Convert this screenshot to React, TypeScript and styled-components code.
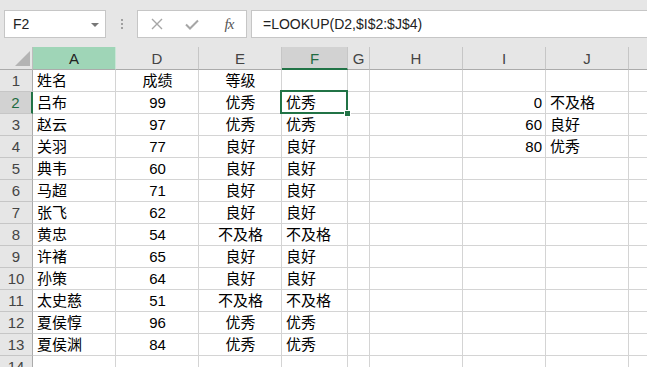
import React from "react";
import styled, { createGlobalStyle, css } from "styled-components";

const Global = createGlobalStyle`
  html, body { margin: 0; padding: 0; overflow: hidden; background: #ffffff; }
  body { width: 647px; height: 367px; font-family: "Liberation Sans", "Noto Sans CJK SC", sans-serif; }
`;

const Page = styled.div`
  width: 647px;
  height: 367px;
  overflow: hidden;
  display: flex;
  flex-direction: column;
`;

const Toolbar = styled.div`
  height: 47px;
  flex: none;
  background: #e6e6e6;
  display: flex;
  align-items: flex-start;
  padding: 10px 0 0 4px;
  box-sizing: border-box;
`;

const NameBox = styled.div`
  width: 102px;
  height: 28px;
  box-sizing: border-box;
  background: #fff;
  border: 1px solid #c6c6c6;
  display: flex;
  align-items: center;
  justify-content: space-between;
  padding: 0 6px 0 8px;
  font-size: 14px;
  color: #222;
`;

const Caret = styled.span`
  width: 0;
  height: 0;
  border-left: 4px solid transparent;
  border-right: 4px solid transparent;
  border-top: 4px solid #777;
  margin-top: 1px;
`;

const Dots = styled.div`
  width: 31px;
  height: 28px;
  display: flex;
  flex-direction: column;
  align-items: center;
  justify-content: center;
  gap: 2px;
`;

const Dot = styled.span`
  width: 2px;
  height: 2px;
  background: #a0a0a0;
`;

const FxBox = styled.div`
  width: 110px;
  height: 28px;
  box-sizing: border-box;
  background: #fff;
  border: 1px solid #c6c6c6;
  display: flex;
  align-items: center;
  padding-left: 12px;
`;

const IconSlot = styled.span<{ $w: number }>`
  width: ${(p) => p.$w}px;
  display: flex;
  align-items: center;
  justify-content: center;
`;

const FxText = styled.span`
  font-family: "Liberation Serif", "DejaVu Serif", serif;
  font-style: italic;
  font-size: 15px;
  color: #555;
  letter-spacing: -1px;
`;

const FormulaInput = styled.div`
  flex: 1;
  margin-left: 4px;
  height: 28px;
  box-sizing: border-box;
  background: #fff;
  border: 1px solid #c6c6c6;
  border-right: none;
  display: flex;
  align-items: center;
  padding-left: 11px;
  font-size: 14px;
  color: #222;
`;

const Sheet = styled.div`
  display: grid;
  grid-template-columns: 33px 83px 83px 83px 66px 22px 93px 83px 83px 83px;
  grid-auto-rows: 22px;
  grid-template-rows: 23px;
  background: #fff;
  overflow: hidden;
`;

const Corner = styled.div`
  background: #e6e6e6;
  border-right: 1px solid #bdbdbd;
  border-bottom: 1px solid #ababab;
  box-sizing: border-box;
  display: flex;
  align-items: flex-end;
  justify-content: flex-end;
  padding: 0 2px 3px 0;
`;

const CornerTriangle = styled.span`
  width: 0;
  height: 0;
  border-left: 15px solid transparent;
  border-bottom: 15px solid #b4b4b4;
`;

const ColHead = styled.div<{ $state?: "sel" | "hl" }>`
  box-sizing: border-box;
  background: #e6e6e6;
  border-right: 1px solid #c6c6c6;
  border-bottom: 1px solid #ababab;
  display: flex;
  align-items: center;
  justify-content: center;
  font-size: 15px;
  color: #444;
  padding-top: 1px;
  ${(p) =>
    p.$state === "sel" &&
    css`
      background: #d2d2d2;
      border-bottom: 2px solid #217346;
      color: #1e6b41;
    `}
  ${(p) =>
    p.$state === "hl" &&
    css`
      background: #9fd5b7;
      border-right: 1px solid #c9e6d6;
      color: #222;
    `}
`;

const RowHead = styled.div<{ $sel?: boolean }>`
  box-sizing: border-box;
  background: #e6e6e6;
  border-right: 1px solid #ababab;
  border-bottom: 1px solid #c6c6c6;
  display: flex;
  align-items: flex-end;
  justify-content: center;
  font-size: 15px;
  line-height: 20px;
  color: #444;
  ${(p) =>
    p.$sel &&
    css`
      background: #d2d2d2;
      border-right: 2px solid #217346;
      color: #1e6b41;
    `}
`;

type Align = "left" | "center" | "right";

const Cell = styled.div<{ $align: Align; $sel?: boolean }>`
  position: relative;
  box-sizing: border-box;
  border-right: 1px solid #d4d4d4;
  border-bottom: 1px solid #d4d4d4;
  display: flex;
  align-items: flex-end;
  justify-content: ${(p) =>
    p.$align === "left" ? "flex-start" : p.$align === "right" ? "flex-end" : "center"};
  padding: 0 3px 0 4px;
  font-size: 15px;
  line-height: 20px;
  color: #000;
  white-space: nowrap;
  ${(p) =>
    p.$sel &&
    css`
      &::after {
        content: "";
        position: absolute;
        top: -2px;
        left: -2px;
        right: -1px;
        bottom: -1px;
        border: 2px solid #217346;
        pointer-events: none;
      }
      &::before {
        content: "";
        position: absolute;
        right: -4px;
        bottom: -4px;
        width: 5px;
        height: 5px;
        background: #217346;
        border: 1px solid #fff;
        z-index: 2;
      }
    `}
`;

const columns: { key: string; align: Align }[] = [
  { key: "A", align: "left" },
  { key: "D", align: "center" },
  { key: "E", align: "center" },
  { key: "F", align: "left" },
  { key: "G", align: "left" },
  { key: "H", align: "left" },
  { key: "I", align: "right" },
  { key: "J", align: "left" },
  { key: "K", align: "left" },
];

const rows: string[][] = [
  ["姓名", "成绩", "等级", "", "", "", "", "", ""],
  ["吕布", "99", "优秀", "优秀", "", "", "0", "不及格", ""],
  ["赵云", "97", "优秀", "优秀", "", "", "60", "良好", ""],
  ["关羽", "77", "良好", "良好", "", "", "80", "优秀", ""],
  ["典韦", "60", "良好", "良好", "", "", "", "", ""],
  ["马超", "71", "良好", "良好", "", "", "", "", ""],
  ["张飞", "62", "良好", "良好", "", "", "", "", ""],
  ["黄忠", "54", "不及格", "不及格", "", "", "", "", ""],
  ["许褚", "65", "良好", "良好", "", "", "", "", ""],
  ["孙策", "64", "良好", "良好", "", "", "", "", ""],
  ["太史慈", "51", "不及格", "不及格", "", "", "", "", ""],
  ["夏侯惇", "96", "优秀", "优秀", "", "", "", "", ""],
  ["夏侯渊", "84", "优秀", "优秀", "", "", "", "", ""],
  ["", "", "", "", "", "", "", "", ""],
];

const CrossIcon = () => (
  <svg width="12" height="12" viewBox="0 0 12 12">
    <path d="M1 1 L11 11 M11 1 L1 11" stroke="#a6a6a6" strokeWidth="1.4" fill="none" />
  </svg>
);

const CheckIcon = () => (
  <svg width="14" height="11" viewBox="0 0 14 11">
    <path d="M1 5.5 L5 9.5 L13 1.5" stroke="#a6a6a6" strokeWidth="2" fill="none" />
  </svg>
);

export default function App() {
  return (
    <Page>
      <Global />
      <Toolbar>
        <NameBox>
          <span>F2</span>
          <Caret />
        </NameBox>
        <Dots>
          <Dot />
          <Dot />
          <Dot />
        </Dots>
        <FxBox>
          <IconSlot $w={14}>
            <CrossIcon />
          </IconSlot>
          <IconSlot $w={56}>
            <CheckIcon />
          </IconSlot>
          <IconSlot $w={18}>
            <FxText>fx</FxText>
          </IconSlot>
        </FxBox>
        <FormulaInput>=LOOKUP(D2,$I$2:$J$4)</FormulaInput>
      </Toolbar>
      <Sheet>
        <Corner>
          <CornerTriangle />
        </Corner>
        {columns.map((c) => (
          <ColHead key={c.key} $state={c.key === "F" ? "sel" : c.key === "A" ? "hl" : undefined}>
            {c.key}
          </ColHead>
        ))}
        {rows.map((r, ri) => (
          <React.Fragment key={ri}>
            <RowHead $sel={ri === 1}>{ri + 1}</RowHead>
            {r.map((v, ci) => (
              <Cell key={ci} $align={columns[ci].align} $sel={ri === 1 && ci === 3}>
                {v}
              </Cell>
            ))}
          </React.Fragment>
        ))}
      </Sheet>
    </Page>
  );
}
